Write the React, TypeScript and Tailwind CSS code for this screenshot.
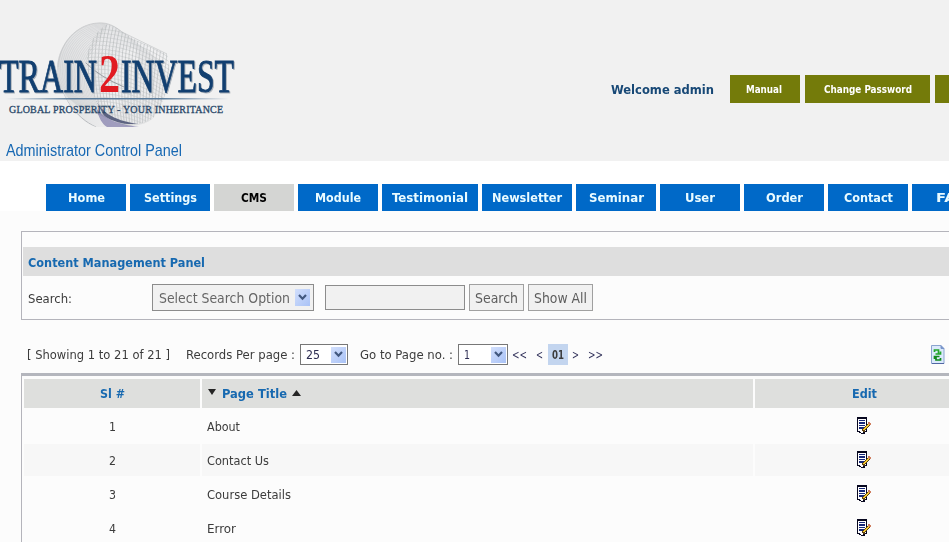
import React from "react";

const tabs = [
  { label: "Home", box: "w-20", text: "w-[37px]" },
  { label: "Settings", box: "w-20", text: "w-[53px]" },
  { label: "CMS", box: "w-20", text: "w-[26px]", active: true },
  { label: "Module", box: "w-20", text: "w-[46px]" },
  { label: "Testimonial", box: "w-24", text: "w-[76px]" },
  { label: "Newsletter", box: "w-[90px]", text: "w-[70px]" },
  { label: "Seminar", box: "w-20", text: "w-[55px]" },
  { label: "User", box: "w-20", text: "w-[30px]" },
  { label: "Order", box: "w-20", text: "w-[37px]" },
  { label: "Contact", box: "w-20", text: "w-[49px]" },
  { label: "FAQ", box: "w-20", text: "w-[32px]" },
];

const rows = [
  { id: 1, title: "About", text: "w-[33px]" },
  { id: 2, title: "Contact Us", text: "w-[62px]" },
  { id: 3, title: "Course Details", text: "w-[84px]" },
  { id: 4, title: "Error", text: "w-[29px]" },
];

/** One line of text squeezed or stretched to the width of its box. */
function Label({ children, className = "" }: { children: string; className?: string }) {
  const ref = React.useRef<HTMLSpanElement>(null);
  const [scale, setScale] = React.useState(1);
  React.useLayoutEffect(() => {
    const inner = ref.current;
    const outer = inner?.parentElement;
    if (inner && outer && inner.offsetWidth) {
      setScale(outer.getBoundingClientRect().width / inner.getBoundingClientRect().width);
    }
  }, []);
  return (
    <span className={`inline-block shrink-0 whitespace-nowrap text-left ${className}`}>
      <span ref={ref} className="inline-block origin-left" style={{ transform: `scaleX(${scale})` }}>
        {children}
      </span>
    </span>
  );
}

function Logo() {
  const lines = Array.from({ length: 26 }, (_, i) => i);
  return (
    <svg width="250" height="132" viewBox="0 0 250 132" className="block">
      <defs>
        <linearGradient id="disc" x1="0" x2="1">
          <stop offset="0" stopColor="#dfe0e1" />
          <stop offset="0.45" stopColor="#ececed" />
          <stop offset="1" stopColor="#f6f6f6" />
        </linearGradient>
        <linearGradient id="rule" x1="0" x2="1">
          <stop offset="0" stopColor="#5b7b99" stopOpacity="0" />
          <stop offset="0.3" stopColor="#5b7b99" />
          <stop offset="0.7" stopColor="#5b7b99" />
          <stop offset="1" stopColor="#5b7b99" stopOpacity="0" />
        </linearGradient>
        <clipPath id="shell">
          <path d="M98 23C108 22 116 27 122 32C138 41 152 46 167 54C173 72 167 100 153 118C146 125 136 127 96 127C78 122 58 94 57 68C58 44 76 24 98 23Z" />
        </clipPath>
        <clipPath id="tube">
          <path d="M108 24C116 27 122 32 138 41L167 54C173 72 167 100 153 118C140 128 118 125 104 116C94 96 84 78 86 60C89 43 96 30 108 24Z" />
        </clipPath>
      </defs>
      <g clipPath="url(#shell)" fill="none">
        <rect x="55" y="20" width="120" height="110" fill="url(#disc)" />
        {lines.map((i) => (
          <ellipse key={i} cx={98 + i * 1.4} cy={67 + i * 0.8} rx={41 - i * 0.3} ry={44 - i * 0.2} stroke="#c8cbcc" strokeWidth="0.5" />
        ))}
        <path d="M57 73C60 96 76 118 96 127" stroke="#babdc0" />
      </g>
      <g clipPath="url(#tube)" fill="none">
        <path d="M108 24L174 52L160 126H104L84 66Z" fill="#efeff0" opacity="0.6" />
        {lines.map((i) => (
          <g key={i} strokeWidth="0.5">
            <path d={`M${94 + i * 3.2} ${18 + i * 1.3}Q${80 + i * 3.7} 70 ${100 + i * 2.5} 130`} stroke="#a9acae" />
            <path d={`M84 ${30 + i * 4}Q126 ${24 + i * 4} 176 ${58 + i * 4}`} stroke="#c3c6c7" />
          </g>
        ))}
        <path d="M85 62Q98 76 124 87" stroke="#999ca1" strokeWidth="1" />
        <path d="M92 93C98 112 106 120 118 124H138C112 120 100 112 92 93Z" fill="#5c6381" />
      </g>
      <path d="M58 67C59 43 77 24 98 23C108 22 116 27 122 32L167 54" fill="none" stroke="#bdc0c1" strokeWidth="0.6" />
      <path d="M96 108C99 118 102 124 107 127H139C118 124 106 120 96 108Z" fill="#7f7baa" opacity="0.7" />
      <g
        className="font-['Liberation_Serif',serif] [filter:drop-shadow(1px_1px_0.5px_#a9b0b8)]"
        fontSize="47"
        fill="#123f70"
        stroke="#123f70"
        strokeWidth="0.9"
      >
        <text x="-1" y="92" textLength="98" lengthAdjust="spacingAndGlyphs">TRAIN</text>
        <text x="121" y="92" textLength="113" lengthAdjust="spacingAndGlyphs">INVEST</text>
      </g>
      <text x="99" y="92" fontSize="55" fontWeight="bold" fill="#e11b22" textLength="21" lengthAdjust="spacingAndGlyphs" className="font-['Liberation_Serif',serif]">2</text>
      <rect x="6" y="98" width="223" height="1.5" fill="url(#rule)" />
      <text x="9" y="112.500" fontSize="10" fill="#29486a" stroke="#29486a" strokeWidth="0.3" textLength="214" className="font-['Liberation_Serif',serif]">
        GLOBAL PROSPERITY - YOUR INHERITANCE
      </text>
    </svg>
  );
}

function EditIcon() {
  return (
    <svg width="16" height="18" viewBox="0 0 16 18" shapeRendering="crispEdges" className="block">
      <path d="M1 0H11V15H9V17H5V16H3V15H1Z" fill="#080820" />
      <path d="M2 2H10V14H8V15H4V14H2Z" fill="#fff" />
      <path d="M3 3H9V4H3ZM3 5H9V7H3ZM3 8H9V9H3ZM3 10H8V12H3Z" fill="#172879" />
      <path d="M6 14V12H7V11H8V10H9V9H10V8H11V7H12V5H14V6H15V8H14V9H13V10H12V11H11V12H10V13H9V15H6Z" fill="#5f4210" />
      <path d="M7 13V12H8V11H9V10H10V9H11V8H12V7H13V9H12V10H11V11H10V12H9V13Z" fill="#f6cb30" />
      <path d="M12 5H14V6H15V8H13V7H12Z" fill="#cf7e60" />
      <path d="M5 14H7V16H5Z" fill="#fff" />
    </svg>
  );
}

function RefreshIcon() {
  return (
    <svg width="14" height="20" viewBox="0 0 14 20" className="block">
      <path d="M0.500 0.500H10L13 3.500V18.500H0.500Z" fill="#dbeafb" stroke="#8ba3cf" />
      <path d="M10 0.500V3.500H13" fill="#7995ca" stroke="#7995ca" />
      <path d="M1 18.500H13" stroke="#5267a5" />
      <path d="M3.500 7V5H7.500V9M4.500 9H9.500V6.500" fill="none" stroke="#22a52b" strokeWidth="1.700" />
      <path d="M9.500 13V15H5V11M8.500 11.500H3.500V14" fill="none" stroke="#118a1d" strokeWidth="1.700" />
    </svg>
  );
}

function Arrow({ className = "" }: { className?: string }) {
  return (
    <span className={`flex shrink-0 items-center justify-center bg-gradient-to-br from-[#d2dffc] to-[#a9c2f6] ${className}`}>
      <svg width="9" height="7" viewBox="0 0 9 7">
        <path d="M1 1L4.500 4.700L8 1" fill="none" stroke="#42587f" strokeWidth="2.200" />
      </svg>
    </span>
  );
}

export default function App() {
  return (
    <div className="h-[542px] w-[949px] overflow-hidden bg-[#fcfcfc] font-['DejaVu_Sans_Condensed','DejaVu_Sans',sans-serif] text-[12px] leading-4 text-[#3c3c3c] [font-stretch:condensed]">
      <header className="flex h-[161px] justify-between bg-[#f1f1f1]">
        <div className="w-[250px]">
          <Logo />
          <div className="pt-[9px] pl-1.5 font-['Liberation_Sans',sans-serif] text-[17px] leading-5 text-[#1768b3]">
            <Label className="w-[176px]">Administrator Control Panel</Label>
          </div>
        </div>
        <div className="mt-[75px] flex h-7 w-[338px] shrink-0 gap-[5px] overflow-hidden font-bold">
          <div className="flex w-[114px] shrink-0 items-center pt-0.5 text-[13px] text-[#174876]">
            <Label className="w-[103px]">Welcome admin</Label>
          </div>
          <button className="flex w-[70px] shrink-0 items-center justify-center bg-[#747b0a] pt-0.5 pr-0.5 text-[11px] text-white">
            <Label className="w-[36px]">Manual</Label>
          </button>
          <button className="flex w-[125px] shrink-0 items-center justify-center bg-[#747b0a] pt-0.5 text-[11px] text-white">
            <Label className="w-[88px]">Change Password</Label>
          </button>
          <div className="w-20 shrink-0 bg-[#747b0a]" />
        </div>
      </header>

      <nav className="flex h-[50px] gap-1 overflow-hidden bg-white pt-[23px] pl-[46px]">
        {tabs.map((tab) => (
          <button
            key={tab.label}
            className={`flex h-[27px] shrink-0 items-center justify-center pt-px font-bold ${tab.box} ${tab.active ? "bg-[#d4d5d3] text-black" : "bg-[#0069c8] text-[#e9fbff]"}`}
          >
            <Label className={tab.text}>{tab.label}</Label>
          </button>
        ))}
      </nav>

      <main className="pt-5 pl-[21px]">
        <section className="h-[89px] border border-r-0 border-[#b4b4bb] pt-[15px] pl-px">
          <h1 className="flex h-[29px] items-center bg-[#dedede] pt-0.5 pl-[5px] font-bold text-[#1769b0]">
            <Label className="w-[177px]">Content Management Panel</Label>
          </h1>
          <div className="flex pt-2 pl-[5px]">
            <div className="w-[124px] pt-[7px]">
              <Label className="w-[44px]">Search:</Label>
            </div>
            <div className="flex h-[27px] w-[162px] items-center justify-between border border-[#8c8c8c] bg-[#f1f1f1] pr-[3px] pl-1.5 text-[14px] text-[#666]">
              <Label className="w-[131px]">Select Search Option</Label>
              <Arrow className="h-[17px] w-[15px]" />
            </div>
            <div className="mt-px ml-[11px] h-[25px] w-[140px] border border-[#8c8c8c] bg-[#f1f1f1]" />
            <button className="ml-1 flex h-[27px] w-[55px] items-center justify-center border border-[#a0a0a0] bg-[#f1f1f1] text-[14px] text-[#5d5d5d]">
              <Label className="w-[43px]">Search</Label>
            </button>
            <button className="ml-1 flex h-[27px] w-[65px] items-center justify-center border border-[#a0a0a0] bg-[#f1f1f1] text-[14px] text-[#5d5d5d]">
              <Label className="w-[53px]">Show All</Label>
            </button>
          </div>
        </section>

        <section className="flex h-[53px] items-center pt-4 pl-1.5">
          <Label className="w-[143px]">[ Showing 1 to 21 of 21 ]</Label>
          <Label className="ml-4 w-[109px]">Records Per page :</Label>
          <div className="ml-[5px] flex h-[21px] w-12 items-center justify-between border border-[#777] bg-white pr-px pl-[5px] text-[#2c2c52]">
            <Label className="w-[14px]">25</Label>
            <Arrow className="h-4 w-[15px]" />
          </div>
          <Label className="ml-3 w-[93px]">Go to Page no. :</Label>
          <div className="ml-[5px] flex h-[21px] w-[50px] items-center justify-between border border-[#777] bg-white pr-px pl-[5px] text-[#2c2c52]">
            <Label className="w-[6px]">1</Label>
            <Arrow className="h-4 w-[15px]" />
          </div>
          <Label className="ml-1 w-[15px] text-[#34345c]">&lt;&lt;</Label>
          <Label className="ml-[9px] w-[7px] text-[#34345c]">&lt;</Label>
          <span className="ml-[5px] flex h-[21px] w-5 items-center justify-center bg-[#c3d5ef] font-bold">
            <Label className="w-[12px]">01</Label>
          </span>
          <Label className="ml-1 w-[7px] text-[#34345c]">&gt;</Label>
          <Label className="ml-[9px] w-[15px] text-[#34345c]">&gt;&gt;</Label>
          <span className="ml-auto pr-1"><RefreshIcon /></span>
        </section>

        <section className="h-[170px] border-t-[3px] border-l border-t-[#b4b6bd] border-l-[#b4b4bb] pt-[3px] pl-0.5">
          <div className="mb-0.5 grid h-[29px] grid-cols-[176px_551px_1fr] gap-x-0.5 font-bold text-[#1769b0] [&>*]:bg-[#dedfdd]">
            <div className="flex items-center justify-center pt-px"><Label className="w-[25px]">Sl #</Label></div>
            <div className="flex items-center pt-px pl-1.5">
              <svg width="8" height="6" viewBox="0 0 8 6" className="-mt-1"><path d="M0 0H8L4 6Z" fill="#252525" /></svg>
              <Label className="ml-1.5 w-[65px]">Page Title</Label>
              <svg width="9" height="6" viewBox="0 0 9 6" className="-mt-0.5 ml-[5px]"><path d="M0 6H9L4.500 0Z" fill="#252525" /></svg>
            </div>
            <div className="flex items-center pt-px pl-[97px]"><Label className="w-[25px]">Edit</Label></div>
          </div>
          {rows.map((row) => (
            <div
              key={row.id}
              className={`mb-0.5 grid h-8 grid-cols-[176px_551px_1fr] gap-x-0.5 ${row.id === 2 ? "[&>*]:bg-[#f7f7f7]" : ""}`}
            >
              <div className="flex items-center justify-center pt-0.5"><Label className="w-[7px]">{String(row.id)}</Label></div>
              <div className="flex items-center pt-0.5 pl-[5px]"><Label className={row.text}>{row.title}</Label></div>
              <div className="pt-[7px] pl-[101px]"><EditIcon /></div>
            </div>
          ))}
        </section>
      </main>
    </div>
  );
}
